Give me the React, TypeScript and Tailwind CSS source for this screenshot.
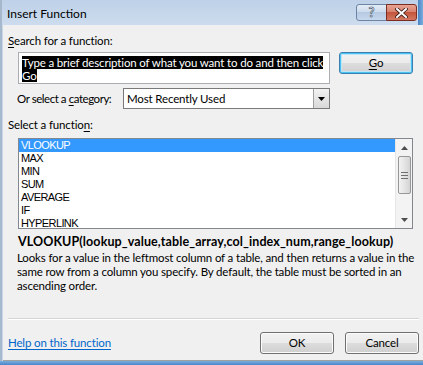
import React from "react";

const ui = "font-['Lato','Noto_Sans',sans-serif]";
const listFont = "font-['Liberation_Sans','Arial',sans-serif]";

const functions = ["VLOOKUP", "MAX", "MIN", "SUM", "AVERAGE", "IF", "HYPERLINK"];

function WinButton({ children, focused = false, className = "" }: { children: React.ReactNode; focused?: boolean; className?: string }) {
  return (
    <button
      className={`h-[22px] rounded-[3px] border text-[11.5px] tracking-[-0.15px] text-black flex items-center justify-center bg-[linear-gradient(#f2f2f2_0%,#ebebeb_50%,#dddddd_50%,#cfcfcf_100%)] ${
        focused
          ? "border-[#3c7fb1] shadow-[inset_0_0_0_1px_#48c2f0,inset_0_0_0_2px_#bfe6f7]"
          : "border-[#707070] shadow-[inset_0_0_0_1px_#fcfcfc]"
      } ${className}`}
    >
      {children}
    </button>
  );
}

function Arrow({ up }: { up?: boolean }) {
  return (
    <svg width="7" height="4" viewBox="0 0 7 4" className="block">
      <path d={up ? "M0 4 L3.5 0 L7 4 Z" : "M0 0 L7 0 L3.5 4 Z"} fill="#4d4d4d" />
    </svg>
  );
}

export default function App() {
  return (
    <div className={`w-[423px] h-[365px] overflow-hidden flex flex-col bg-[#c6d7ea] ${ui}`}>
      {/* title bar */}
      <div className="h-[25px] shrink-0 flex items-center bg-[linear-gradient(#bed1e8,#cddcee)] border-l-2 border-[#a6b8cc] pr-[6px] relative">
        <span className="ml-[5px] text-[12px] text-black leading-none mt-[2px]">Insert Function</span>
        <div className="ml-auto flex self-start mt-[4px]">
          <div className="w-[31px] h-[17px] rounded-l-[3px] border border-[#6d85a5] bg-[linear-gradient(#e3ecf7_0%,#cbdaec_50%,#b5c9e2_50%,#c7d8ec_100%)] flex items-center justify-center">
            <span className="text-[13px] font-bold leading-none text-white [-webkit-text-stroke:0.6px_#2d3e57]">?</span>
          </div>
          <div className="w-[31px] h-[17px] -ml-px rounded-r-[3px] border border-[#7b2d22] bg-[linear-gradient(#e8a493_0%,#d7806c_50%,#c4553c_50%,#d47862_100%)] flex items-center justify-center">
            <svg width="13" height="10" viewBox="0 0 13 10">
              <path d="M2 1 L11 9 M11 1 L2 9" stroke="#3a1a14" strokeWidth="3.6" strokeLinecap="square" />
              <path d="M2 1 L11 9 M11 1 L2 9" stroke="#ffffff" strokeWidth="2" strokeLinecap="square" />
            </svg>
          </div>
        </div>
        <div className="absolute right-0 top-0 bottom-0 w-[5px] bg-[linear-gradient(90deg,#4a84c4,#7aaee0)]" />
      </div>

      {/* body */}
      <div className="flex flex-1 min-h-0">
        <div className="w-[3px] shrink-0 bg-[#c6d7ea] border-l-2 border-[#a6b8cc]" />
        <div className="flex-1 flex flex-col bg-[#f0f0f0] border-r border-b border-[#a0a0a0] pl-[5px] pr-[4px] pt-[8px] text-[11.5px] tracking-[-0.15px] text-black">
          <div className="h-[15px] leading-[15px]">
            <span className="underline underline-offset-[2px]">S</span>earch for a function:
          </div>

          <div className="flex mt-[4px]">
            <div className="ml-[10px] w-[312px] h-[32px] border border-[#abadb3] bg-white pl-[3px] pt-[3px] leading-[13px] whitespace-nowrap">
              <span className="bg-black text-white">Type a brief description of what you want to do and then click </span>
              <br />
              <span className="bg-black text-white">Go</span>
            </div>
            <WinButton focused className="ml-[9px] w-[74px]">
              <span><span className="underline underline-offset-[2px]">G</span>o</span>
            </WinButton>
          </div>

          <div className="flex items-center mt-[4px] h-[21px]">
            <span className="ml-[9px] w-[106px] whitespace-nowrap tracking-[-0.45px]">
              Or select a <span className="underline underline-offset-[2px]">c</span>ategory:
            </span>
            <div className="w-[207px] h-[21px] border border-[#7a7a7a] bg-white flex items-center">
              <span className="ml-[3px] flex-1">Most Recently Used</span>
              <div className="w-[16px] h-[19px] border-l border-[#a0a0a0] bg-[linear-gradient(#f2f2f2,#d9d9d9)] flex items-center justify-center">
                <svg width="7" height="4" viewBox="0 0 7 4"><path d="M0 0 L7 0 L3.5 4 Z" fill="#000" /></svg>
              </div>
            </div>
          </div>

          <div className="h-[15px] leading-[15px] mt-[8px]">
            Select a functio<span className="underline underline-offset-[2px]">n</span>:
          </div>

          <div className="ml-[10px] mt-[6px] w-[395px] h-[91px] border border-[#828790] bg-white flex">
            <div className={`flex-1 ${listFont} text-[11px] tracking-[-0.6px]`}>
              {functions.map((f, i) => (
                <div
                  key={f}
                  className={`h-[13px] leading-[13px] pl-[2px] ${i === 0 ? "bg-[#3399ff] text-white" : "text-black"}`}
                >
                  {f}
                </div>
              ))}
            </div>
            <div className="w-[17px] bg-[#f3f3f3] border-l border-[#e6e6e6] flex flex-col items-center">
              <div className="h-[17px] flex items-center justify-center"><Arrow up /></div>
              <div className="w-[13px] h-[38px] rounded-[2px] border border-[#979797] bg-[linear-gradient(90deg,#f2f2f2,#e4e4e4_50%,#d4d4d4)] flex flex-col items-center justify-center gap-[2px]">
                <div className="w-[7px] h-px bg-[#6f6f6f]" />
                <div className="w-[7px] h-px bg-[#6f6f6f]" />
                <div className="w-[7px] h-px bg-[#6f6f6f]" />
              </div>
              <div className="flex-1" />
              <div className="h-[17px] flex items-center justify-center"><Arrow /></div>
            </div>
          </div>

          <div className="ml-[10px] mt-[5px] h-[15px] leading-[15px] font-bold text-[12.5px] tracking-[0.1px] whitespace-nowrap">
            VLOOKUP(lookup_value,table_array,col_index_num,range_lookup)
          </div>
          <p className="ml-[9px] mt-[2px] leading-[14px] w-[402px]">
            Looks for a value in the leftmost column of a table, and then returns a value in the same row from a column you specify. By default, the table must be sorted in an ascending order.
          </p>

          <div className="mt-auto h-px bg-[#d5d5d5] border-b border-white box-content" />

          <div className="flex items-center mt-[12px] mb-[6px]">
            <a href="#" className="text-[#0066cc] underline underline-offset-[2px]">Help on this function</a>
            <WinButton className="ml-auto w-[74px]">OK</WinButton>
            <WinButton className="ml-[11px] w-[74px]">Cancel</WinButton>
          </div>
        </div>
        <div className="w-[5px] shrink-0 bg-[linear-gradient(90deg,#4a84c4,#7aaee0)]" />
      </div>
      <div className="h-[4px] shrink-0 bg-[linear-gradient(#7aaee0,#4a84c4)]" />
    </div>
  );
}
